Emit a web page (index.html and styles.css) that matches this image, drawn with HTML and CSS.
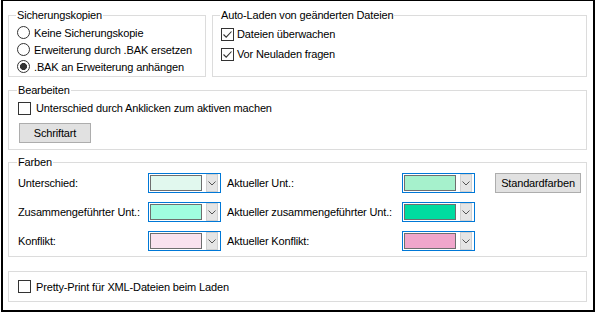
FILE: index.html
```html
<!DOCTYPE html>
<html lang="de">
<head>
    <meta charset="UTF-8">
    <title>Optionen</title>
    <link rel="stylesheet" href="styles.css">
</head>
<body>
    <div class="window">
        <div class="top-row">
            <fieldset class="group group-backup">
                <legend>Sicherungskopien</legend>
                <label class="opt radio-row"><span class="radio"></span>Keine Sicherungskopie</label>
                <label class="opt radio-row"><span class="radio"></span>Erweiterung durch .BAK ersetzen</label>
                <label class="opt radio-row"><span class="radio checked"></span>.BAK an Erweiterung anhängen</label>
            </fieldset>
            <fieldset class="group group-reload">
                <legend>Auto-Laden von geänderten Dateien</legend>
                <label class="opt check-row"><span class="check checked"></span>Dateien überwachen</label>
                <label class="opt check-row"><span class="check checked"></span>Vor Neuladen fragen</label>
            </fieldset>
        </div>

        <fieldset class="group group-edit">
            <legend>Bearbeiten</legend>
            <label class="opt check-row"><span class="check"></span>Unterschied durch Anklicken zum aktiven machen</label>
            <button class="btn btn-font">Schriftart</button>
        </fieldset>

        <fieldset class="group group-colors">
            <legend>Farben</legend>
            <div class="color-grid">
                <span class="color-label">Unterschied:</span>
                <span class="combo"><span class="swatch" style="background:#e1f8ee"></span><span class="arrow"></span></span>
                <span class="color-label second">Aktueller Unt.:</span>
                <span class="combo"><span class="swatch" style="background:#a6f1cc"></span><span class="arrow"></span></span>
                <button class="btn btn-default">Standardfarben</button>

                <span class="color-label">Zusammengeführter Unt.:</span>
                <span class="combo"><span class="swatch" style="background:#a0fde0"></span><span class="arrow"></span></span>
                <span class="color-label second">Aktueller zusammengeführter Unt.:</span>
                <span class="combo"><span class="swatch" style="background:#00dca0"></span><span class="arrow"></span></span>
                <span></span>

                <span class="color-label">Konflikt:</span>
                <span class="combo"><span class="swatch" style="background:#f9e2ef"></span><span class="arrow"></span></span>
                <span class="color-label second">Aktueller Konflikt:</span>
                <span class="combo"><span class="swatch" style="background:#f0a6cb"></span><span class="arrow"></span></span>
                <span></span>
            </div>
        </fieldset>

        <div class="group group-pretty">
            <label class="opt check-row"><span class="check"></span>Pretty-Print für XML-Dateien beim Laden</label>
        </div>
    </div>
</body>
</html>
```

FILE: styles.css
```css
body {
    margin: 0;
    font-family: "Liberation Sans", Arial, sans-serif;
    font-size: 11px;
    letter-spacing: -0.15px;
    color: #000;
    background: #fff;
}

.window {
    box-sizing: border-box;
    width: 594px;
    height: 312px;
    margin-left: 1px;
    border: 2px solid #000;
    border-top-width: 1px;
    padding: 7px 6px 0 5px;
    white-space: nowrap;
}

/* group boxes */
.group {
    margin: 0;
    border: 1px solid #dcdcdc;
    padding: 0 8px;
    min-width: 0;
}

.group legend {
    padding: 0 1px;
    margin-left: -1px;
    line-height: 15px;
}

.top-row {
    display: flex;
    gap: 6px;
}

.group-backup {
    width: 198px;
    box-sizing: border-box;
    padding: 1px 8px 1px 8px;
}

.group-reload {
    flex: 1;
    padding-top: 1px;
}

.group-edit {
    margin-top: 6px;
    padding: 0 9px 6px 9px;
}

.group-colors {
    margin-top: 5px;
    padding: 3px 9px 5px 9px;
}

.group-pretty {
    margin-top: 14px;
    padding: 6px 9px 6px 9px;
}

/* radios and checkboxes */
.opt {
    display: flex;
    align-items: center;
}

.radio-row {
    height: 17px;
    gap: 4px;
}

.check-row {
    height: 20px;
    gap: 5px;
}

.group-reload .check-row {
    gap: 3px;
}

.group-pretty .check-row {
    height: 17px;
}

.radio {
    box-sizing: border-box;
    width: 13px;
    height: 13px;
    border: 1px solid #333;
    border-radius: 50%;
    background: #fff;
    flex: none;
}

.radio.checked {
    background: radial-gradient(circle, #333 0 3.2px, #fff 3.8px);
}

.check {
    box-sizing: border-box;
    width: 13px;
    height: 13px;
    border: 1px solid #333;
    background: #fff;
    flex: none;
}

.check.checked {
    background: #fff url("data:image/svg+xml;utf8,<svg xmlns='http://www.w3.org/2000/svg' width='11' height='11'><path d='M1.5 5.5 L4.2 8.2 L9.5 2.5' fill='none' stroke='%23333' stroke-width='1.1'/></svg>") no-repeat center;
}

/* buttons */
.btn {
    box-sizing: border-box;
    height: 20px;
    border: 1px solid #adadad;
    background: #e1e1e1;
    font-family: inherit;
    font-size: 11px;
    letter-spacing: -0.15px;
    color: #000;
    padding: 0;
}

.btn-font {
    width: 72px;
    margin-top: 5px;
    margin-left: 1px;
    display: block;
}

.btn-default {
    width: 86px;
    margin-left: 20px;
}

/* colour table */
.color-grid {
    display: grid;
    grid-template-columns: 130px 73px 181px 73px auto;
    grid-auto-rows: 20px;
    row-gap: 9px;
    align-items: center;
}

.color-label.second {
    padding-left: 6px;
}

.combo {
    box-sizing: border-box;
    width: 73px;
    height: 20px;
    border: 1px solid #0078d7;
    display: flex;
    align-items: center;
    padding: 0 2px 0 1px;
    gap: 4px;
}

.swatch {
    box-sizing: border-box;
    width: 53px;
    height: 16px;
    border: 1px solid #6e6e6e;
}

.arrow {
    box-sizing: border-box;
    width: 12px;
    height: 18px;
    background: #e5e5e5 url("data:image/svg+xml;utf8,<svg xmlns='http://www.w3.org/2000/svg' width='8' height='5'><path d='M0.5 0.5 L4 4 L7.5 0.5' fill='none' stroke='%23555' stroke-width='1'/></svg>") no-repeat center;
    border: 1px solid #d0d0d0;
}
```
